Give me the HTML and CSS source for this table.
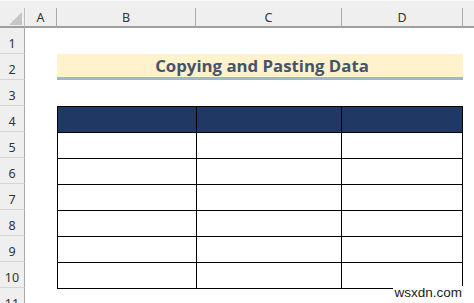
FILE: index.html
```html
<!DOCTYPE html>
<html>
<head>
<meta charset="utf-8">
<link rel="stylesheet" href="styles.css">
</head>
<body>
<div class="sheet">
  <div class="strip"></div>
  <div class="corner"><span class="tri"></span></div>
  <div class="colhead">A</div>
  <div class="colhead">B</div>
  <div class="colhead">C</div>
  <div class="colhead">D</div>
  <div class="colhead last"></div>

  <div class="rowhead">1</div><div class="blank"></div>
  <div class="rowhead">2</div><div class="title">Copying and Pasting Data</div>
  <div class="rowhead">3</div>
  <div class="rowhead">4</div>
  <div class="rowhead">5</div>
  <div class="rowhead">6</div>
  <div class="rowhead">7</div>
  <div class="rowhead">8</div>
  <div class="rowhead">9</div>
  <div class="rowhead">10</div>
  <div class="rowhead">11</div>

  <table class="data">
    <tr class="hd"><td class="cb"></td><td class="cc"></td><td class="cd"></td></tr>
    <tr><td></td><td></td><td></td></tr>
    <tr><td></td><td></td><td></td></tr>
    <tr><td></td><td></td><td></td></tr>
    <tr><td></td><td></td><td></td></tr>
    <tr><td></td><td></td><td></td></tr>
    <tr><td></td><td></td><td></td></tr>
  </table>
  <div class="mark">wsxdn.com</div>
</div>
</body>
</html>
```
FILE: styles.css
```css
html, body {
  margin: 0;
  padding: 0;
  background: #ffffff;
  overflow: hidden;
}
.sheet {
  position: relative;
  width: 474px;
  height: 303px;
  display: grid;
  grid-template-columns: 25px 32px 139px 146px 121px 1fr;
  grid-template-rows: 8px 20px repeat(11, 26px);
  font-family: "Noto Sans", "Open Sans", sans-serif;
  overflow: hidden;
}
.strip {
  grid-column: 1 / -1;
  grid-row: 1;
  background: #efefef;
  border-top: 1px solid #fafafa;
}
.corner {
  grid-column: 1;
  grid-row: 2;
  background: #efefef;
  border-right: 1px solid #bdbdbd;
  border-bottom: 2px solid #9f9f9f;
  position: relative;
}
.tri {
  position: absolute;
  right: 2px;
  bottom: 1px;
  width: 0;
  height: 0;
  border-left: 13px solid transparent;
  border-bottom: 13px solid #c6c6c6;
}
.colhead {
  grid-row: 2;
  background: #efefef;
  border-right: 1px solid #aaaaaa;
  border-bottom: 2px solid #9f9f9f;
  font-size: 12.5px;
  color: #333;
  display: flex;
  align-items: center;
  justify-content: center;
  padding-top: 1px;
}
.colhead.last {
  border-right: none;
}
.rowhead {
  grid-column: 1;
  background: #efefef;
  border-right: 1px solid #a8a8a8;
  border-bottom: 1px solid #d6d6d6;
  font-size: 12.5px;
  color: #333;
  display: flex;
  align-items: center;
  justify-content: center;
  padding-top: 5px;
  box-sizing: border-box;
}
.blank {
  grid-column: 2 / -1;
}
.title {
  grid-column: 3 / 6;
  grid-row: 4;
  background: #fff2cc;
  border-bottom: 3px solid #a3b4cf;
  color: #44546a;
  font-family: "Open Sans", Lato, sans-serif;
  font-weight: bold;
  font-size: 16.8px;
  display: flex;
  align-items: flex-end;
  justify-content: center;
  padding-bottom: 0;
  padding-left: 4px;
  box-sizing: border-box;
}
.data {
  grid-column: 3 / 6;
  grid-row: 6 / 13;
  border-collapse: collapse;
  height: 183px;
  margin: 0;
  table-layout: fixed;
  align-self: start;
  justify-self: start;
}
.data td {
  border: 1px solid #000;
  height: 25px;
  padding: 0;
}
.data .cb { width: 138px; }
.data .cc { width: 145px; }
.data .cd { width: 120px; }
.data .hd td {
  background: #203864;
}
.mark {
  position: absolute;
  right: 11px;
  top: 286px;
  font-family: "Liberation Sans", Arial, sans-serif;
  font-size: 13.5px;
  color: #1a1a1a;
  background: #ffffff;
  line-height: 14px;
  padding: 0 1px;
}
```
